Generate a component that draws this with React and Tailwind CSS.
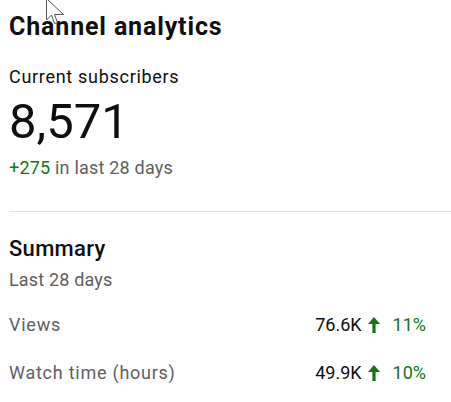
export default function App() {
  const rows = [
    { label: 'Views', value: '76.6K', change: '11%' },
    { label: 'Watch time (hours)', value: '49.9K', change: '10%' },
  ]

  return (
    <div
      className="relative h-[402px] w-[451px] overflow-hidden bg-white pl-[9px] pt-[11px] text-[#0f0f0f]"
      style={{ fontFamily: 'Roboto, "Noto Sans", Arial, sans-serif' }}
    >
      <h1 className="text-[25px] font-bold leading-[32px] tracking-[0.85px]">Channel analytics</h1>

      {/* Subscriber count */}
      <div className="mt-[22px] text-[18px] leading-[24px] tracking-[0.7px]">Current subscribers</div>
      <div className="mt-[5px] text-[49px] leading-[56px]">8,571</div>
      <div className="mt-[6px] text-[18px] leading-[24px] tracking-[0.2px] text-[#606060]">
        <span className="text-[#107516]">+275</span> in last 28 days
      </div>

      <div className="mt-[31px] h-px bg-[#e5e5e5]" />

      {/* Summary */}
      <h2 className="mt-[23px] text-[22px] font-medium leading-[28px] tracking-[0.3px]">Summary</h2>
      <div className="mt-[5px] text-[18px] leading-[24px] tracking-[0.17px] text-[#606060]">Last 28 days</div>

      <div className="mt-[21px] flex flex-col gap-[24px] pr-[25px]">
        {rows.map((r) => (
          <div key={r.label} className="flex items-center justify-between text-[18px] leading-[24px]">
            <span className="tracking-[0.75px] text-[#606060]">{r.label}</span>
            <span className="flex items-center">
              <span>{r.value}</span>
              <svg width="14" height="18" viewBox="0 0 14 18" className="ml-[5px] text-[#107516]">
                <path d="M7 1 L13 8 L8.6 8 L8.6 17 L5.4 17 L5.4 8 L1 8 Z" fill="currentColor" />
              </svg>
              <span className="ml-[12px] text-[#107516]">{r.change}</span>
            </span>
          </div>
        ))}
      </div>

      {/* mouse pointer */}
      <svg
        className="pointer-events-none absolute left-[46px] top-[-2px]"
        width="20"
        height="30"
        viewBox="0 0 20 30"
      >
        <path
          d="M0.5 0.5 L0.5 22 L5.5 17 L8.5 25.5 L11.5 24.5 L8.5 16.5 L17.5 16.5 Z"
          fill="white"
          stroke="#555"
          strokeWidth="1"
        />
      </svg>
    </div>
  )
}
